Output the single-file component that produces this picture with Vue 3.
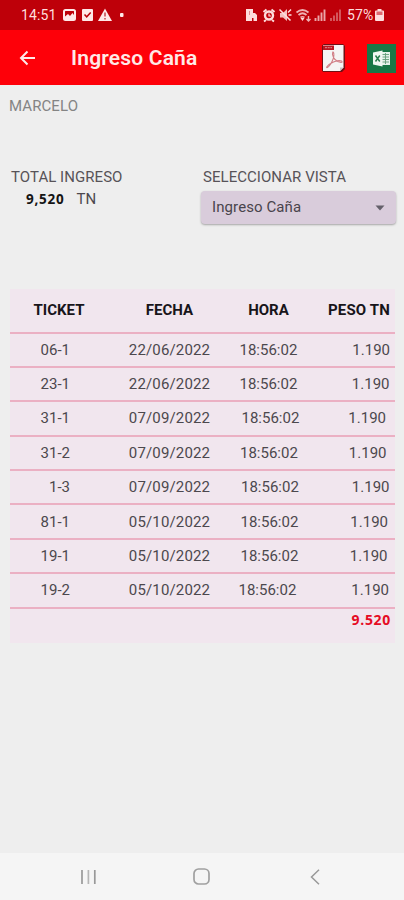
<script setup>
const rows = [
  { ticket: '06-1', date: '22/06/2022', time: '18:56:02', weight: '1.190', timeLeft: 8.5, weightRight: 5 },
  { ticket: '23-1', date: '22/06/2022', time: '18:56:02', weight: '1.190', timeLeft: 8.5, weightRight: 5.5 },
  { ticket: '31-1', date: '07/09/2022', time: '18:56:02', weight: '1.190', timeLeft: 10.5, weightRight: 9 },
  { ticket: '31-2', date: '07/09/2022', time: '18:56:02', weight: '1.190', timeLeft: 9, weightRight: 8.5 },
  { ticket: '1-3', date: '07/09/2022', time: '18:56:02', weight: '1.190', timeLeft: 10, weightRight: 5.5 },
  { ticket: '81-1', date: '05/10/2022', time: '18:56:02', weight: '1.190', timeLeft: 9.5, weightRight: 7 },
  { ticket: '19-1', date: '05/10/2022', time: '18:56:02', weight: '1.190', timeLeft: 9.5, weightRight: 7.5 },
  { ticket: '19-2', date: '05/10/2022', time: '18:56:02', weight: '1.190', timeLeft: 7.5, weightRight: 6 }
]
</script>

<template>
  <div class="screen">
    <div class="status">
      <span class="clock">14:51</span>
      <svg class="left-icons" width="64" height="16" viewBox="0 0 64 16">
        <rect x="1" y="3" width="11" height="10" rx="1.5" fill="none" stroke="#ffe9e9" stroke-width="2" />
        <path d="M2 12V9.500l3-2.500 2 2 2.500-3 2.500 3.500V12z" fill="#ffe9e9" />
        <rect x="19" y="2" width="11" height="12" rx="1" fill="#ffe9e9" />
        <path d="M21.500 7.500l2.200 2.300 4-4.300" fill="none" stroke="#b8000a" stroke-width="1.500" />
        <path d="M42 1.500L49 14H35z" fill="#ffe9e9" />
        <path d="M42 5.500v4M42 11v1.500" stroke="#c4444b" stroke-width="1.500" />
        <rect x="57" y="6" width="3.500" height="4" rx="1" fill="#ffe9e9" />
      </svg>
      <svg class="right-icons" width="98" height="16" viewBox="0 0 98 16">
        <path d="M0 2h7v4h2l2 2v6H7.500v-3H6v3H0z" fill="#ffdcdc" />
        <path d="M3.500 4v4" stroke="#e58b90" />
        <g fill="none" stroke="#ffdcdc">
          <circle cx="23" cy="8.500" r="4" stroke-width="2.400" />
          <path d="M17.500 5l3-2.500M28.500 5l-3-2.500M20 13l-2 1.500M26 13l2 1.500" stroke-width="2" />
          <path d="M23 6.500v2.500h2" stroke-width="1.200" />
        </g>
        <path d="M34 6h3l4-4v12l-4-3.500h-3z" fill="#f5bfc1" />
        <path d="M33.500 2.500l11 11M42 5.500l3-3M42.500 8h3" fill="none" stroke="#ffe0e0" stroke-width="1.500" />
        <g fill="none" stroke="#efb0b3" stroke-width="1.700">
          <path d="M50.500 5.500q6-5 12 0M52.500 8q4-3.500 8 0M54.500 10.500q2-1.500 4 0" />
          <path d="M62.500 9v5M60.500 12l2 2 2-2" stroke-width="1.400" />
        </g>
        <path d="M56.500 14l-2-3h4z" fill="#ffdcdc" />
        <path d="M69.500 14v-3M72.500 14V8.500M75.500 14V5.500M78.500 14V2.500" stroke="#eba5a8" stroke-width="1.900" />
        <path d="M85 14v-3M88 14V8.500M91 14V5.500M94 14V2.500" stroke="#d7666b" stroke-width="1.700" />
      </svg>
      <span class="percent">57%</span>
      <svg class="battery" width="9" height="14" viewBox="0 0 9 14">
        <path d="M2.500 1h4v1.500H8q1 0 1 1V12q0 1-1 1H1q-1 0-1-1V3.500q0-1 1-1h1.500z" fill="#ffdede" />
        <path d="M1.500 3.500h6V7h-6z" fill="#df6970" />
      </svg>
    </div>

    <header class="appbar">
      <svg class="back" width="18" height="16" viewBox="0 0 18 16" fill="none" stroke="#ffe9e9" stroke-width="2">
        <path d="M16 8H2M8.500 1.500L2 8l6.500 6.500" />
      </svg>
      <h1>Ingreso Caña</h1>
      <svg class="pdf" width="26" height="30" viewBox="0 0 26 30">
        <path d="M1 2.500l2-1.500H22l2 2v23l-3 3H2l-1-1.500z" fill="#6f1015" />
        <path d="M2 2h20.500v22.500L19 28H2z" fill="#f5f4f4" />
        <path d="M22.500 24.500L19 28v-3.500z" fill="#c9c2c3" />
        <rect x="2" y="2.500" width="11" height="4.500" fill="#b91420" />
        <path d="M4 4.700h7" stroke="#e48b90" stroke-dasharray="2 .7" />
        <path d="M12 9q1.500 1 .5 6-2.500 7-6 9.500-1.500.5-.5-1 2-2.500 6.500-4.500 5-2 8-1 1.500 1.500-.5 1.500-3 0-6-3-2-2-2.500-5 0-2 .5-2.500z" fill="none" stroke="#d17f87" stroke-width="1.100" />
      </svg>
      <svg class="excel" width="29" height="29" viewBox="0 0 29 29">
        <rect width="29" height="29" fill="#187746" />
        <path d="M14 8h9v13h-9z" fill="#e5f1e9" />
        <path d="M15 10.500h7M15 13h7M15 15.500h7M15 18h7M18.500 9v11" stroke="#639d79" stroke-width=".9" />
        <path d="M6 8.500L15.500 6.500v16L6 20.500z" fill="#f1f7f2" />
        <path d="M8.500 11.500l4.300 6M12.800 11.500l-4.300 6" stroke="#287c4d" stroke-width="1.500" />
      </svg>
    </header>

    <main>
      <div class="name">MARCELO</div>
      <section class="summary">
        <div class="total">
          <div class="label">TOTAL INGRESO</div>
          <div class="amount"><b>9,520</b><span>TN</span></div>
        </div>
        <div class="view">
          <div class="label view-label">SELECCIONAR VISTA</div>
          <div class="select">
            <span>Ingreso Caña</span>
            <svg width="10" height="6" viewBox="0 0 10 6"><path d="M.5.500h9L5 5.500z" fill="#64606a" /></svg>
          </div>
        </div>
      </section>

      <section class="table">
        <div class="row head">
          <span>TICKET</span><span>FECHA</span><span>HORA</span><span class="peso">PESO TN</span>
        </div>
        <div v-for="row in rows" :key="row.ticket" class="row">
          <span class="ticket">{{ row.ticket }}</span>
          <span class="date">{{ row.date }}</span>
          <span class="time" :style="{ paddingLeft: row.timeLeft + 'px' }">{{ row.time }}</span>
          <span class="weight" :style="{ paddingRight: row.weightRight + 'px' }">{{ row.weight }}</span>
        </div>
        <div class="sum">9.520</div>
      </section>
    </main>

    <nav>
      <svg width="16" height="16" viewBox="0 0 16 16" stroke="#999" stroke-width="1.700"><path d="M2 1v14M14.800 1v14" /><path d="M8.400 1v14" stroke="#b5b5b5" /></svg>
      <svg class="home" width="17" height="17" viewBox="0 0 17 17" fill="none" stroke="#a0a0a0" stroke-width="1.700"><rect x="1" y="1" width="15" height="15" rx="4.500" /></svg>
      <svg width="10" height="16" viewBox="0 0 10 16" fill="none" stroke="#999" stroke-width="1.500"><path d="M9 .8L1.500 8 9 15.200" /></svg>
    </nav>
  </div>
</template>

<style>
body { margin: 0; background: #eee; }
</style>

<style scoped>
.screen { box-sizing: border-box; width: 404px; height: 900px; display: flex; flex-direction: column; background: #eee; font-family: Roboto, sans-serif; color: #4c484d; overflow: hidden; }
svg { display: block; flex-shrink: 0; }
.status { height: 30px; flex: none; background: #be0009; display: flex; align-items: center; color: #ffdede; font-size: 14px; line-height: 30px; padding-left: 21px; }
.clock { width: 42px; letter-spacing: .1px; }
.right-icons { margin-left: 119px; }
.percent { margin-left: 3px; width: 27px; letter-spacing: .1px; font-size: 14px; }
.battery { margin-left: 1px; }
.appbar { height: 55px; flex: none; background: #fe0009; display: flex; align-items: center; padding: 0 8px 0 19px; }
h1 { margin: 0 0 0 34px; width: 250px; font-size: 21px; line-height: 28px; font-weight: 600; color: #ffe9e7; letter-spacing: .18px; }
.pdf { margin-top: 1px; }
.excel { margin-left: auto; margin-top: 2px; }
main { flex: 1; }
.name { padding: 12px 0 0 9px; font-size: 15px; line-height: 18px; color: #848484; letter-spacing: .08px; }
.summary { display: flex; padding: 53px 8px 0 11px; }
.total { width: 190px; }
.label { font-size: 15px; line-height: 18px; color: #575358; letter-spacing: .05px; }
.view { width: 195px; }
.view-label { padding-left: 2px; }
.amount { display: flex; align-items: center; gap: 12px; padding: 4px 0 0 15px; height: 18px; font-size: 15px; }
.amount b { font-family: "Open Sans", sans-serif; font-size: 13.500px; font-weight: 700; letter-spacing: .75px; color: #151515; }
.select { height: 33px; margin-top: 5px; box-sizing: border-box; padding: 0 11px; display: flex; justify-content: space-between; align-items: center; background: #d9ccdb; border-radius: 4px; box-shadow: 0 1px 2px #77777799; font-size: 15px; letter-spacing: .1px; color: #49444c; }
.select span { margin-top: -2px; }
.table { margin: 65px 9px 0 10px; height: 354px; background: #f1e6ee; }
.row { height: 34.400px; box-sizing: border-box; border-bottom: 2px solid #ebb0c3; display: grid; grid-template-columns: 98px 123px 75px 89px; align-items: center; font-size: 15px; line-height: 20px; }
.head { height: 44.500px; font-weight: 700; color: #18151a; text-align: center; }
.head .peso { text-align: right; padding-right: 5px; letter-spacing: .15px; }
.ticket { text-align: right; padding-right: 38px; }
.date { text-align: center; letter-spacing: .15px; }
.time { white-space: nowrap; }
.weight { text-align: right; }
.sum { text-align: right; padding-right: 4px; font-family: "Open Sans", sans-serif; font-weight: 700; font-size: 14px; letter-spacing: .7px; line-height: 22px; color: #e50c24; }
nav { height: 47px; flex: none; background: #f5f5f5; display: flex; align-items: center; justify-content: space-between; padding: 0 84px 0 80px; box-sizing: border-box; }
.home { margin-right: 4px; }
</style>
